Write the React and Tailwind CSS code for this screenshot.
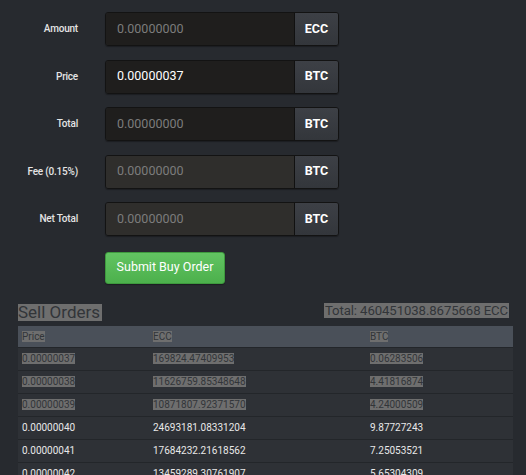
import React from "react";

const fields = [
  { label: "Amount", value: "0.00000000", unit: "ECC", filled: false, disabled: false },
  { label: "Price", value: "0.00000037", unit: "BTC", filled: true, disabled: false },
  { label: "Total", value: "0.00000000", unit: "BTC", filled: false, disabled: false },
  { label: "Fee (0.15%)", value: "0.00000000", unit: "BTC", filled: false, disabled: true },
  { label: "Net Total", value: "0.00000000", unit: "BTC", filled: false, disabled: true },
];

const rows = [
  ["0.00000037", "169824.47409953", "0.06283506", true],
  ["0.00000038", "11626759.85348648", "4.41816874", true],
  ["0.00000039", "10871807.92371570", "4.24000509", true],
  ["0.00000040", "24693181.08331204", "9.87727243", false],
  ["0.00000041", "17684232.21618562", "7.25053521", false],
  ["0.00000042", "13459289.30761907", "5.65304309", false],
];

function Sel({ on, children }) {
  return on ? (
    <span className="bg-[#6e6e6e] text-[#323539]">{children}</span>
  ) : (
    <span>{children}</span>
  );
}

export default function App() {
  return (
    <div
      className="w-[526px] h-[475px] overflow-hidden bg-[#272a2f] text-white"
      style={{ fontFamily: "Roboto, 'Liberation Sans', sans-serif" }}
    >
      <div className="pt-[12px] flex flex-col gap-[13.5px]">
        {fields.map((f) => (
          <div key={f.label} className="flex items-start">
            <div className="w-[78px] text-right text-[10px] font-medium text-[#e4e4e4] pt-[9px] tracking-[-0.2px]">
              {f.label}
            </div>
            <div className="ml-[27px] flex h-[34px] w-[234px] rounded-[3px] border border-[#131313] overflow-hidden shadow-[0_1px_1px_rgba(0,0,0,0.3)]">
              <div
                className={`flex-1 flex items-center pl-[11px] text-[12.5px] ${
                  f.disabled ? "bg-[#2f2e2c]" : "bg-[#1f1e1d]"
                } ${f.filled ? "text-white" : "text-[#7c7c7c]"}`}
              >
                {f.value}
              </div>
              <div className="w-[44px] flex items-center justify-center border-l border-[#111] bg-gradient-to-b from-[#3d4046] to-[#33363b] text-[12.5px] font-bold text-white">
                {f.unit}
              </div>
            </div>
          </div>
        ))}
        <div className="pl-[105px] pt-[2px]">
          <button className="h-[32px] w-[120px] rounded-[3px] bg-gradient-to-b from-[#62c462] to-[#4cb04c] border border-[#3e9a3e] text-[12.5px] text-white shadow-[0_1px_1px_rgba(0,0,0,0.3)]">
            Submit Buy Order
          </button>
        </div>
      </div>

      <div className="mt-[19px] mx-[18px] w-[495px]">
        <div className="flex items-end justify-between">
          <div className="text-[17px] leading-[17px] bg-[#6e6e6e] text-[#323539] pr-[2px]">
            Sell Orders
          </div>
          <div className="text-[13.2px] leading-[15px] bg-[#6e6e6e] text-[#323539] mr-[4px] mb-[3px] px-[1px] tracking-[-0.1px]">
            Total: 460451038.8675668 ECC
          </div>
        </div>
        <div className="mt-[5px] text-[10px]">
          <div className="grid grid-cols-[131px_217px_1fr] h-[22px] items-center bg-[#4a5059] border-b border-[#23262a]">
            <div className="pl-[4px]"><Sel on>Price</Sel></div>
            <div className="pl-[4px]"><Sel on>ECC</Sel></div>
            <div className="pl-[4px]"><Sel on>BTC</Sel></div>
          </div>
          {rows.map((r) => (
            <div
              key={r[0]}
              className="grid grid-cols-[131px_217px_1fr] h-[23px] items-center bg-[#2e3136] border-b border-[#23262a] text-[#e8e8e8]"
            >
              <div className="pl-[4px]"><Sel on={r[3]}>{r[0]}</Sel></div>
              <div className="pl-[4px]"><Sel on={r[3]}>{r[1]}</Sel></div>
              <div className="pl-[4px]"><Sel on={r[3]}>{r[2]}</Sel></div>
            </div>
          ))}
        </div>
      </div>
    </div>
  );
}
